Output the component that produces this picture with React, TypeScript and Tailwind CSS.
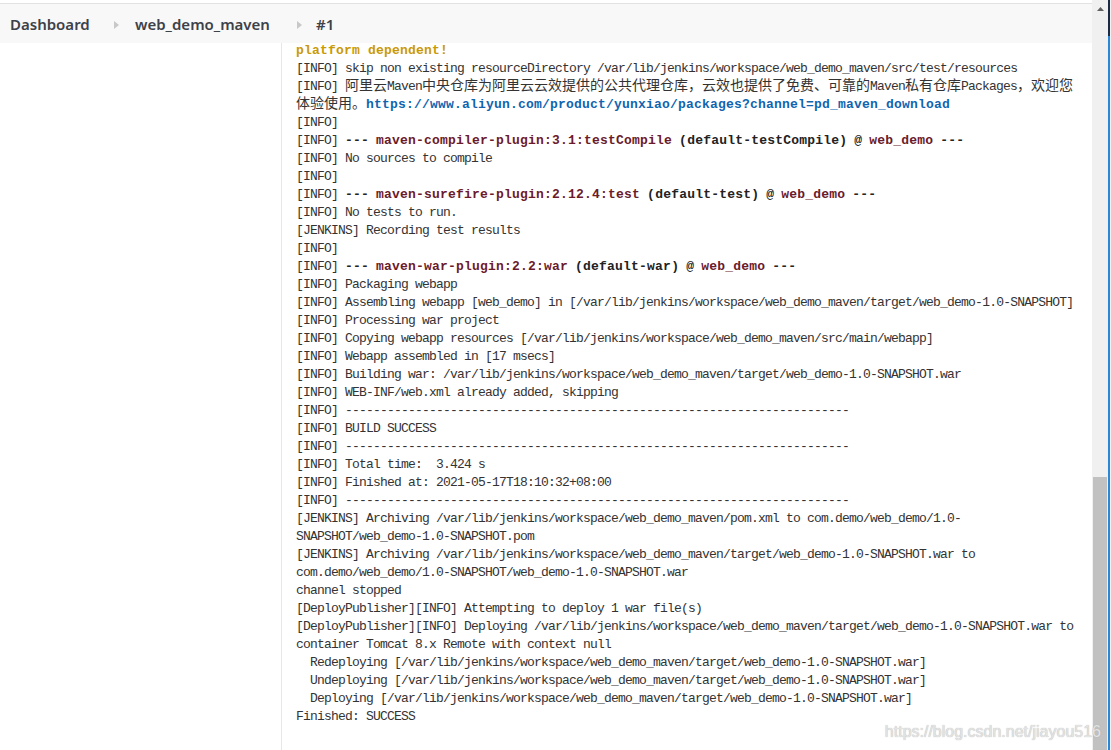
import React from "react";

const mono = "font-['Liberation_Mono','Noto_Sans_CJK_SC',monospace]";

const B = ({ children, c }: { children: React.ReactNode; c?: string }) => (
  <b className={`font-bold tracking-[0.2px] ${c ?? "text-[#222]"}`}>{children}</b>
);

const C = ({ children }: { children: React.ReactNode }) => (
  <span className="font-['Noto_Sans_CJK_SC',sans-serif] text-[14px] tracking-[0px] leading-[0px]">
    {children}
  </span>
);

const Mojo = ({ plugin, exec }: { plugin: string; exec: string }) => (
  <>
    {"[INFO] "}
    <B>---</B> <B c="text-[#6a1b2c]">{plugin}</B> <B>({exec})</B> <B>@</B>{" "}
    <B c="text-[#6a1b2c]">web_demo</B> <B>---</B>
  </>
);

const dashes = "[INFO] " + "-".repeat(72);
const ws = "/var/lib/jenkins/workspace/web_demo_maven";

const lines: React.ReactNode[] = [
  <B c="text-[#c99a06]">platform dependent!</B>,
  `[INFO] skip non existing resourceDirectory ${ws}/src/test/resources`,
  <>
    {"[INFO] "}
    <C>阿里云</C>Maven<C>中央仓库为阿里云云效提供的公共代理仓库，云效也提供了免费、可靠的</C>Maven<C>私有仓库</C>Packages<C>，欢迎您</C>
  </>,
  <>
    <C>体验使用。</C>
    <B c="text-[#0f65b0]">https://www.aliyun.com/product/yunxiao/packages?channel=pd_maven_download</B>
  </>,
  "[INFO]",
  <Mojo plugin="maven-compiler-plugin:3.1:testCompile" exec="default-testCompile" />,
  "[INFO] No sources to compile",
  "[INFO]",
  <Mojo plugin="maven-surefire-plugin:2.12.4:test" exec="default-test" />,
  "[INFO] No tests to run.",
  "[JENKINS] Recording test results",
  "[INFO]",
  <Mojo plugin="maven-war-plugin:2.2:war" exec="default-war" />,
  "[INFO] Packaging webapp",
  `[INFO] Assembling webapp [web_demo] in [${ws}/target/web_demo-1.0-SNAPSHOT]`,
  "[INFO] Processing war project",
  `[INFO] Copying webapp resources [${ws}/src/main/webapp]`,
  "[INFO] Webapp assembled in [17 msecs]",
  `[INFO] Building war: ${ws}/target/web_demo-1.0-SNAPSHOT.war`,
  "[INFO] WEB-INF/web.xml already added, skipping",
  dashes,
  "[INFO] BUILD SUCCESS",
  dashes,
  "[INFO] Total time:  3.424 s",
  "[INFO] Finished at: 2021-05-17T18:10:32+08:00",
  dashes,
  `[JENKINS] Archiving ${ws}/pom.xml to com.demo/web_demo/1.0-`,
  "SNAPSHOT/web_demo-1.0-SNAPSHOT.pom",
  `[JENKINS] Archiving ${ws}/target/web_demo-1.0-SNAPSHOT.war to`,
  "com.demo/web_demo/1.0-SNAPSHOT/web_demo-1.0-SNAPSHOT.war",
  "channel stopped",
  "[DeployPublisher][INFO] Attempting to deploy 1 war file(s)",
  `[DeployPublisher][INFO] Deploying ${ws}/target/web_demo-1.0-SNAPSHOT.war to`,
  "container Tomcat 8.x Remote with context null",
  `  Redeploying [${ws}/target/web_demo-1.0-SNAPSHOT.war]`,
  `  Undeploying [${ws}/target/web_demo-1.0-SNAPSHOT.war]`,
  `  Deploying [${ws}/target/web_demo-1.0-SNAPSHOT.war]`,
  "Finished: SUCCESS",
];

const Sep = ({ w }: { w: string }) => (
  <div className={`${w} flex items-center`}>
    <svg width="5" height="8" viewBox="0 0 5 8">
      <path d="M0 0 L5 4 L0 8 Z" fill="#c8c8c8" />
    </svg>
  </div>
);

export default function App() {
  return (
    <div className="relative w-[1111px] h-[750px] overflow-hidden bg-white flex">
      <div className="w-[1092px] flex flex-col">
        <div className="h-[3px] bg-white" />
        <div className="h-[40px] pt-[2px] bg-[#f8f8f8] border-t border-[#e2e2e2] flex items-center pl-[10px] font-['Noto_Sans',sans-serif] font-semibold text-[15px] text-[#3d4148] z-10">
          <div className="w-[104px]">Dashboard</div>
          <Sep w="w-[21px]" />
          <div className="w-[162px]">web_demo_maven</div>
          <Sep w="w-[19px]" />
          <div>#1</div>
        </div>
        <div className="flex-1 flex -mt-[1px]">
          <div className="w-[282px] border-r border-[#e4e7eb]" />
          <div
            className={`flex-1 pl-[14px] overflow-hidden ${mono} text-[13px] leading-[18px] tracking-[-0.8px] text-[#333]`}
          >
            {lines.map((l, i) => (
              <div key={i} className="whitespace-pre h-[18px]">
                {l}
              </div>
            ))}
          </div>
        </div>
      </div>
      <div className="w-[16px] bg-[#f0f0f0] flex flex-col">
        <div className="h-[18px] flex items-center justify-center">
          <svg width="7" height="4" viewBox="0 0 7 4">
            <path d="M0 4 L3.5 0 L7 4 Z" fill="#606060" />
          </svg>
        </div>
        <div className="flex-1" />
        <div className="h-[273px] mx-[1px] bg-[#c1c1c1]" />
      </div>
      <div className="w-[2px] bg-[#2a86d8] flex flex-col">
        <div className="h-[36px] bg-[#1b2a44]" />
      </div>
      <div className="w-[1px] bg-[#f2f2f2]" />
      <div className="absolute right-[10px] bottom-[6px] font-['Liberation_Sans',sans-serif] text-[16px] text-[#e4e4e4] [text-shadow:0_0_1px_#a8a8a8]">
        https://blog.csdn.net/jiayou516
      </div>
    </div>
  );
}
